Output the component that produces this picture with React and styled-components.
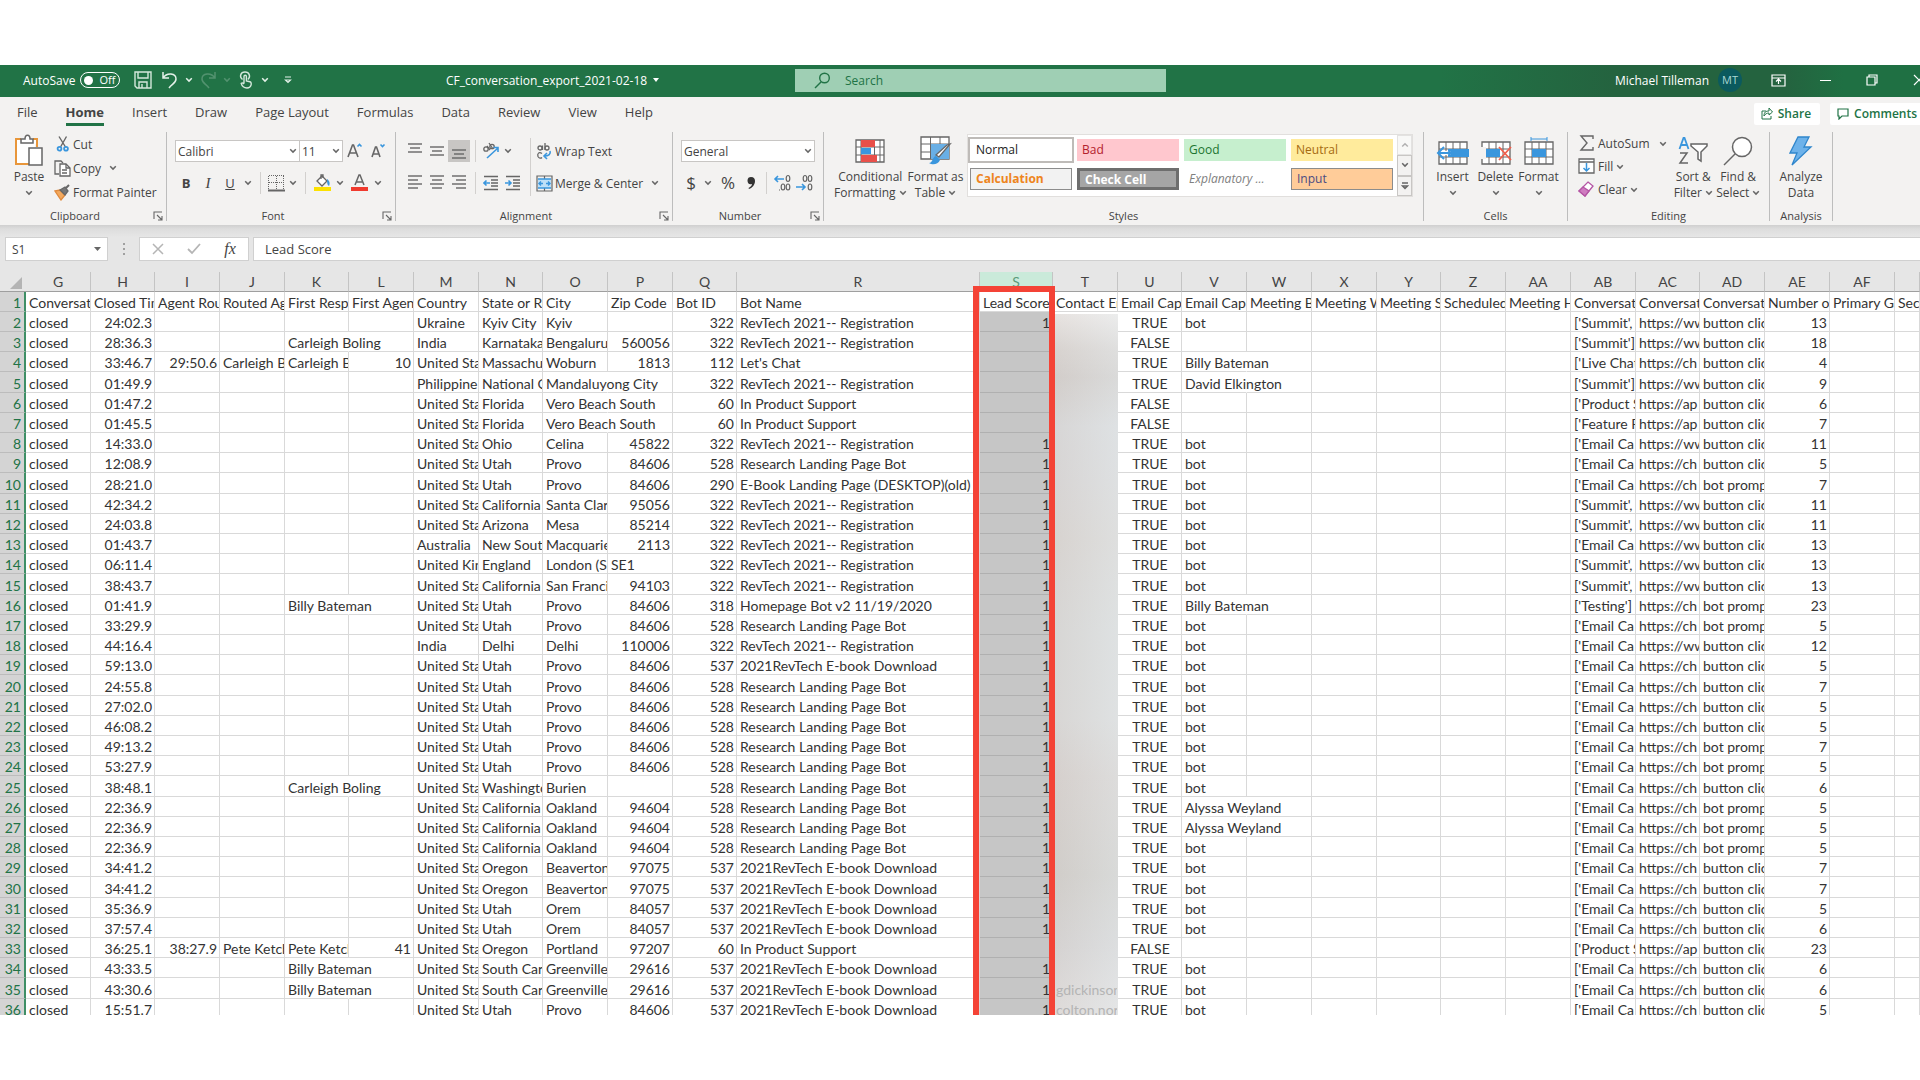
import React, { useState } from "react";
import styled, { createGlobalStyle } from "styled-components";

const green = "#217346";
const mint = "#9fcfb4";
const ribbonGrey = "#f3f2f1";
const barGrey = "#e6e6e6";
const line = "#d9d9d9";
const ink = "#444444";
const blue = "#3a96dd";

const uiFont = `"Open Sans", "Noto Sans", sans-serif`;
const cellFont = `Lato, "Liberation Sans", sans-serif`;

const GlobalStyle = createGlobalStyle`
    *, *::before, *::after {
        box-sizing: border-box;
    }

    body {
        margin: 0;
        background: #ffffff;
        font-family: ${uiFont};
        font-size: 12px;
        color: ${ink};
    }

    button, input, select {
        font: inherit;
        color: inherit;
    }
`;

/**
 * All drawings go through this svg, so stroke defaults are shared.
 */
const Icon = styled.svg.attrs(({ w = 16, h = 16 }) => ({
    width: w,
    height: h,
    viewBox: `0 0 ${w} ${h}`,
    "aria-hidden": true
}))`
    display: block;
    flex: none;
    fill: none;
    stroke: ${({ tone = "#666666" }) => tone};
`;

const Chevron = ({ tone = "#666666" }) =>
    <Icon w={8} h={6} tone={tone} strokeWidth="1.5">
        <path d="M1.2 1.3 4 4.1 6.8 1.3" />
    </Icon>;

const Page = styled.div`
    height: 100vh;
    padding: 65px 0;
    display: flex;
    flex-direction: column;
    overflow: hidden;
`;

const Window = styled.div`
    flex: 1;
    min-height: 0;
    display: flex;
    flex-direction: column;
    overflow: hidden;
`;

/* ---- Title bar ---- */

const TitleBar = styled.header`
    flex: none;
    display: flex;
    align-items: center;
    height: 32px;
    padding-bottom: 2px;
    color: #ffffff;
    background: linear-gradient(90deg, ${green} 75%, #24633f 84%, #24633f 93%, #1f7043 96%);
`;

const QuickAccess = styled.div`
    flex: none;
    display: flex;
    align-items: center;
    width: 446px;
    padding-left: 23px;
`;

const AutoSave = styled.label`
    display: flex;
    align-items: center;
    gap: 5px;
    width: 108px;
    font-size: 12px;
`;

const Pill = styled.span`
    display: flex;
    align-items: center;
    gap: 6px;
    height: 16px;
    padding: 0 4px 0 3px;
    border: 1px solid #ffffff;
    border-radius: 8px;
    font-size: 11px;
    line-height: 14px;
`;

const Knob = styled.input.attrs({ type: "checkbox" })`
    appearance: none;
    width: 9px;
    height: 9px;
    margin: 0;
    border-radius: 50%;
    background: #ffffff;
`;

const BarButton = styled.button`
    flex: none;
    display: flex;
    align-items: center;
    justify-content: center;
    width: ${({ w = 24 }) => w}px;
    height: 30px;
    padding: 0;
    border: none;
    background: none;
    opacity: ${({ $faded = false }) => $faded ? 0.25 : 1};
`;

const FileName = styled.button`
    flex: none;
    display: flex;
    align-items: center;
    gap: 6px;
    width: 349px;
    padding: 0;
    border: none;
    background: none;
    font-size: 12px;
    white-space: nowrap;
`;

const Search = styled.label`
    display: flex;
    align-items: center;
    gap: 14px;
    width: 371px;
    height: 23px;
    padding-left: 19px;
    color: ${green};
    background: ${mint};
`;

const SearchInput = styled.input`
    flex: 1;
    min-width: 0;
    padding: 0;
    border: none;
    outline: none;
    background: none;

    &::placeholder {
        color: ${green};
        opacity: 1;
    }
`;

const Account = styled.div`
    display: flex;
    align-items: center;
    gap: 9px;
    margin-left: auto;
    white-space: nowrap;
`;

const Avatar = styled.span`
    width: 24px;
    height: 24px;
    border-radius: 50%;
    background: #0b5a5e;
    color: #a9d8d4;
    font-size: 11px;
    line-height: 24px;
    text-align: center;
`;

const WindowButtons = styled.div`
    flex: none;
    display: flex;
    gap: 23px;
    margin: 0 -11px 0 24px;
`;

/* ---- Tabs ---- */

const TabRow = styled.nav`
    flex: none;
    display: flex;
    align-items: center;
    height: 33px;
    padding-left: 17px;
    background: ${ribbonGrey};
`;

const TabList = styled.div`
    display: flex;
    gap: 28px;
`;

const Tab = styled.button`
    height: 25px;
    padding: 0;
    border: none;
    border-bottom: 3px solid ${({ $active }) => $active ? green : "transparent"};
    background: none;
    font-weight: ${({ $active }) => $active ? 700 : 400};
    font-size: 13px;
    white-space: nowrap;
`;

const TabActions = styled.div`
    display: flex;
    gap: 10px;
    margin: 0 -6px 0 auto;
`;

const ActionButton = styled.button`
    display: flex;
    align-items: center;
    gap: 5px;
    height: 22px;
    padding: 0 9px 0 7px;
    border: none;
    border-radius: 2px;
    background: #ffffff;
    color: ${green};
    font-weight: 600;
`;

/* ---- Ribbon ---- */

const Ribbon = styled.section`
    flex: none;
    display: flex;
    height: 95px;
    padding: 2px 0 4px;
    background: ${ribbonGrey};
`;

const Group = styled.div`
    flex: none;
    display: flex;
    flex-direction: column;
    width: ${({ w }) => w}px;
    border-right: 1px solid #bdbdbd;
`;

const GroupBody = styled.div`
    flex: 1;
    display: flex;
    padding-left: ${({ inset = 8 }) => inset}px;
`;

const GroupFoot = styled.footer`
    display: flex;
    align-items: center;
    height: 10px;
    font-size: 11px;
    line-height: 10px;
`;

const GroupName = styled.span`
    flex: 1;
    text-align: center;
`;

const Launcher = styled.button`
    display: flex;
    justify-content: center;
    width: 16px;
    padding: 0;
    border: none;
    background: none;
`;

const Stack = styled.div`
    display: flex;
    flex-direction: column;
    gap: ${({ gap = 0 }) => gap}px;
    padding-top: ${({ top = 0 }) => top}px;
    margin-left: ${({ left = 0 }) => left}px;
`;

const Row = styled.div`
    display: flex;
    align-items: center;
    height: 22px;
`;

const ToolButton = styled.button`
    display: flex;
    align-items: center;
    justify-content: center;
    width: ${({ w = 22 }) => w}px;
    height: 22px;
    padding: 0;
    border: none;
    background: ${({ $active }) => $active ? "#c8c6c4" : "none"};
`;

const LabelButton = styled.button`
    display: flex;
    align-items: center;
    gap: ${({ gap = 2 }) => gap}px;
    height: ${({ h = 24 }) => h}px;
    padding: 0;
    border: none;
    background: none;
    white-space: nowrap;
`;

const IconSlot = styled.span`
    display: flex;
    justify-content: center;
    width: 17px;
`;

const TallButton = styled.button`
    display: grid;
    grid-template-rows: 37px 16px 16px;
    align-items: center;
    justify-items: center;
    align-self: flex-start;
    width: ${({ w }) => w}px;
    padding: 0;
    border: none;
    background: none;
    line-height: 16px;
    white-space: nowrap;
`;

const Line = styled.span`
    display: flex;
    align-items: center;
    gap: 3px;
`;

const Divider = styled.span`
    flex: none;
    width: 1px;
    height: ${({ h = 22 }) => h}px;
    margin: ${({ top = 0 }) => top}px 5px 0;
    background: #d2d0ce;
`;

const Combo = styled.label`
    display: flex;
    align-items: center;
    width: ${({ w }) => w}px;
    height: 22px;
    margin-right: ${({ $joined }) => $joined ? "-1px" : 0};
    padding: 0 2px;
    border: 1px solid #c8c6c4;
    background: #ffffff;
`;

const Select = styled.select`
    flex: 1;
    min-width: 0;
    padding: 0;
    border: none;
    outline: none;
    appearance: none;
    background: none;
`;

const Glyph = styled.span`
    font-size: ${({ size = 14 }) => size}px;
    line-height: 18px;
    font-weight: ${({ $bold }) => $bold ? 700 : 400};
    font-style: ${({ $italic }) => $italic ? "italic" : "normal"};
    font-family: ${({ $italic }) => $italic ? `"Liberation Serif", serif` : uiFont};
    text-decoration: ${({ $under }) => $under ? "underline" : "none"};
`;

const Gallery = styled.div`
    display: flex;
    height: 63px;
    border: 1px solid #e1dfdd;
    background: #ffffff;
`;

const Swatches = styled.div`
    display: grid;
    grid-template-columns: repeat(4, 102px);
    grid-template-rows: 22px 22px;
    gap: 7px 5px;
    padding: 4px 4px 0 2px;
`;

const Swatch = styled.button`
    height: 22px;
    padding: 0 0 0 5px;
    border: ${({ $edge = "none" }) => $edge};
    outline: ${({ $selected }) => $selected ? "2px solid #bebbb8" : "none"};
    background: ${({ $fill }) => $fill};
    color: ${({ $ink }) => $ink};
    font-weight: ${({ $bold }) => $bold ? 700 : 400};
    font-style: ${({ $italic }) => $italic ? "italic" : "normal"};
    font-size: 12px;
    line-height: 18px;
    text-align: left;
    white-space: nowrap;
`;

const Scroller = styled.div`
    display: grid;
    grid-template-rows: repeat(3, 1fr);
    width: 15px;
`;

const ScrollButton = styled.button`
    display: flex;
    align-items: center;
    justify-content: center;
    padding: 0;
    border: 1px solid #c8c6c4;
    background: ${ribbonGrey};
    opacity: ${({ disabled }) => disabled ? 0.5 : 1};
`;

/* ---- Formula bar ---- */

const FormulaBar = styled.div`
    flex: none;
    display: flex;
    height: 47px;
    padding: 12px 0 11px 5px;
    background: linear-gradient(#cfcfcf, #dddddd 4px, ${barGrey} 12px);
`;

const BarBox = styled.div`
    display: flex;
    align-items: center;
    width: ${({ w }) => w}px;
    border: 1px solid #d0d0d0;
    background: #ffffff;
`;

const NameInput = styled.input`
    flex: 1;
    min-width: 0;
    padding: 0 0 0 6px;
    border: none;
    outline: none;
    background: none;
    font-size: 12px;
`;

const Grip = styled.span`
    display: flex;
    align-items: center;
    justify-content: center;
    width: 31px;
`;

const FormulaInput = styled.input`
    flex: 1;
    min-width: 0;
    margin-left: 4px;
    padding: 0 0 0 11px;
    border: 1px solid #d0d0d0;
    border-right: none;
    outline: none;
    background: #ffffff;
    font-size: 13px;
`;

/* ---- Sheet ---- */

const Sheet = styled.main`
    position: relative;
    flex: 1;
    min-height: 0;
    overflow: hidden;
    background: #ffffff;
`;

const Grid = styled.table`
    position: relative;
    width: 100%;
    table-layout: fixed;
    border-collapse: separate;
    border-spacing: 0;
    font-family: ${cellFont};
    font-size: 14px;
    line-height: 17px;
    color: #333333;

    tr {
        height: 20px;
    }

    tbody tr:nth-child(5n) {
        height: 21px;
    }
`;

const Corner = styled.td`
    padding: 0;
    border-bottom: 1px solid #9f9f9f;
    background: ${barGrey};
`;

const ColumnHead = styled.th`
    padding: 0;
    border-right: 1px solid #c4c4c4;
    border-bottom: 1px solid #9f9f9f;
    background: ${({ $active }) => $active ? "#caeada" : barGrey};
    color: ${({ $active }) => $active ? "#5a9a7a" : ink};
    font-weight: 400;
`;

const RowHead = styled.th`
    padding: 2px 3px 0 0;
    border-right: 2px solid #3f8f66;
    border-bottom: 1px solid #bcbcbc;
    background: #d4d4d4;
    color: ${green};
    font-weight: 400;
    text-align: right;
`;

const Cell = styled.td`
    padding: 2px 2px 0 3px;
    overflow: ${({ $spill }) => $spill ? "visible" : "hidden"};
    border-right: 1px solid ${({ $spill, $veiled }) => $spill || $veiled ? "transparent" : line};
    border-bottom: 1px solid ${({ $veiled, $picked }) => $veiled ? "transparent" : $picked ? "#b0b0b0" : line};
    background: ${({ $picked }) => $picked ? "#c6c6c6" : "none"};
    color: ${({ $veiled }) => $veiled ? "#b4b4b4" : "inherit"};
    text-align: ${({ $side = "left" }) => $side};
    white-space: nowrap;
`;

// Smudge hiding the contact addresses, sits behind the table
const Veil = styled.div`
    position: absolute;
    top: 42px;
    bottom: 0;
    left: 1053px;
    width: 65px;
    background:
        linear-gradient(90deg, rgba(200, 185, 178, 0.25), rgba(226, 230, 232, 0.35)),
        linear-gradient(
            #f1f0ef, #dddbd9 5%, #d5d3d1 9%, #dcdfe1 16%, #dcddde 24%, #dcdbd9 32%,
            #dcdfdf 45%, #dddfdf 58%, #dad7d5 66%, #d3d3d0 80%, #d9dadb 90%, #e6e6e6
        );
`;

const Highlight = styled.div`
    position: absolute;
    top: 14px;
    bottom: 0;
    left: 973px;
    width: 82px;
    border: 6px solid #f44336;
    border-bottom: none;
    pointer-events: none;
`;

const columns = [
    ["G", 65], ["H", 64], ["I", 65], ["J", 65], ["K", 64], ["L", 65], ["M", 65],
    ["N", 64], ["O", 65], ["P", 65], ["Q", 64], ["R", 243], ["S", 73], ["T", 65],
    ["U", 64], ["V", 65], ["W", 65], ["X", 65], ["Y", 64], ["Z", 65], ["AA", 65],
    ["AB", 65], ["AC", 64], ["AD", 65], ["AE", 65], ["AF", 65], ["AG", null]
];

const titles = {
    G: "Conversat", H: "Closed Tim", I: "Agent Rou", J: "Routed Ag",
    K: "First Resp", L: "First Agen", M: "Country", N: "State or Re",
    O: "City", P: "Zip Code", Q: "Bot ID", R: "Bot Name", S: "Lead Score",
    T: "Contact Em", U: "Email Cap", V: "Email Cap", W: "Meeting B",
    X: "Meeting W", Y: "Meeting S", Z: "Scheduled", AA: "Meeting H",
    AB: "Conversat", AC: "Conversat", AD: "Conversat", AE: "Number o",
    AF: "Primary G", AG: "Sec"
};

const alignment = {
    H: "right", I: "right", L: "right", P: "right", Q: "right",
    S: "right", U: "center", AE: "right"
};

const bots = {
    rev: [322, "RevTech 2021-- Registration"],
    chat: [112, "Let's Chat"],
    support: [60, "In Product Support"],
    research: [528, "Research Landing Page Bot"],
    ebook: [290, "E-Book Landing Page (DESKTOP)(old)"],
    home: [318, "Homepage Bot v2 11/19/2020"],
    download: [537, "2021RevTech E-book Download"]
};

const US = "United Sta";
const email = "['Email Ca";
const summit = "['Summit',";
const www = "https://ww";
const chat = "https://ch";
const app = "https://ap";
const click = "button clic";
const prompt = "bot promp";

// time, country, state, city, zip, bot, topic, link, event, count, extra cells
const data = [
    ["24:02.3", "Ukraine", "Kyiv City", "Kyiv", "", "rev", summit, www, click, 13],
    ["28:36.3", "India", "Karnataka", "Bengaluru", 560056, "rev", "['Summit']", www, click, 18, { K: "Carleigh Boling", S: "", U: "FALSE", V: "" }],
    ["33:46.7", US, "Massachu", "Woburn", 1813, "chat", "['Live Chat", chat, click, 4, { I: "29:50.6", J: "Carleigh B", K: "Carleigh B", L: 10, S: "", V: "Billy Bateman" }],
    ["01:49.9", "Philippine", "National C", "Mandaluyong City", "", "rev", "['Summit']", www, click, 9, { S: "", V: "David Elkington" }],
    ["01:47.2", US, "Florida", "Vero Beach South", "", "support", "['Product S", app, click, 6, { S: "", U: "FALSE", V: "" }],
    ["01:45.5", US, "Florida", "Vero Beach South", "", "support", "['Feature R", app, click, 7, { S: "", U: "FALSE", V: "" }],
    ["14:33.0", US, "Ohio", "Celina", 45822, "rev", email, www, click, 11],
    ["12:08.9", US, "Utah", "Provo", 84606, "research", email, chat, click, 5],
    ["28:21.0", US, "Utah", "Provo", 84606, "ebook", email, chat, prompt, 7],
    ["42:34.2", US, "California", "Santa Clar", 95056, "rev", summit, www, click, 11],
    ["24:03.8", US, "Arizona", "Mesa", 85214, "rev", summit, www, click, 11],
    ["01:43.7", "Australia", "New Sout", "Macquarie", 2113, "rev", email, www, click, 13],
    ["06:11.4", "United Kin", "England", "London (S", "SE1", "rev", summit, www, click, 13],
    ["38:43.7", US, "California", "San Franci", 94103, "rev", summit, www, click, 13],
    ["01:41.9", US, "Utah", "Provo", 84606, "home", "['Testing']", chat, prompt, 23, { K: "Billy Bateman", V: "Billy Bateman" }],
    ["33:29.9", US, "Utah", "Provo", 84606, "research", email, chat, prompt, 5],
    ["44:16.4", "India", "Delhi", "Delhi", 110006, "rev", email, www, click, 12],
    ["59:13.0", US, "Utah", "Provo", 84606, "download", email, chat, click, 5],
    ["24:55.8", US, "Utah", "Provo", 84606, "research", email, chat, click, 7],
    ["27:02.0", US, "Utah", "Provo", 84606, "research", email, chat, click, 5],
    ["46:08.2", US, "Utah", "Provo", 84606, "research", email, chat, click, 5],
    ["49:13.2", US, "Utah", "Provo", 84606, "research", email, chat, prompt, 7],
    ["53:27.9", US, "Utah", "Provo", 84606, "research", email, chat, prompt, 5],
    ["38:48.1", US, "Washingto", "Burien", "", "research", email, chat, click, 6, { K: "Carleigh Boling" }],
    ["22:36.9", US, "California", "Oakland", 94604, "research", email, chat, prompt, 5, { V: "Alyssa Weyland" }],
    ["22:36.9", US, "California", "Oakland", 94604, "research", email, chat, prompt, 5, { V: "Alyssa Weyland" }],
    ["22:36.9", US, "California", "Oakland", 94604, "research", email, chat, prompt, 5],
    ["34:41.2", US, "Oregon", "Beaverton", 97075, "download", email, chat, click, 7],
    ["34:41.2", US, "Oregon", "Beaverton", 97075, "download", email, chat, click, 7],
    ["35:36.9", US, "Utah", "Orem", 84057, "download", email, chat, click, 5],
    ["37:57.4", US, "Utah", "Orem", 84057, "download", email, chat, click, 6],
    ["36:25.1", US, "Oregon", "Portland", 97207, "support", "['Product S", app, click, 23, { I: "38:27.9", J: "Pete Ketch", K: "Pete Ketch", L: 41, S: "", U: "FALSE", V: "" }],
    ["43:33.5", US, "South Caro", "Greenville", 29616, "download", email, chat, click, 6, { K: "Billy Bateman" }],
    ["43:30.6", US, "South Caro", "Greenville", 29616, "download", email, chat, click, 6, { K: "Billy Bateman", T: "gdickinson" }],
    ["15:51.7", US, "Utah", "Provo", 84606, "download", email, chat, click, 5, { T: "colton.nor" }]
];

const rows = data.map(([H, M, N, O, P, bot, AB, AC, AD, AE, extra]) => ({
    G: "closed", H, M, N, O, P, Q: bots[bot][0], R: bots[bot][1],
    S: 1, U: "TRUE", V: "bot", AB, AC, AD, AE, ...extra
}));

// Long text runs over its right neighbour when that cell is empty
const spills = (row, name, next) =>
    ["K", "O", "V"].includes(name) && String(row[name] ?? "").length > 10 && !row[next];

// A zip code that is not a number keeps to the left
const sideOf = (row, name) =>
    name === "P" && typeof row[name] === "string" ? "left" : alignment[name];

const tabs = [
    "File", "Home", "Insert", "Draw", "Page Layout", "Formulas",
    "Data", "Review", "View", "Help"
];

const styles = [
    { label: "Normal", $fill: "#ffffff", $ink: "#222222", $edge: "1px solid #ffffff", $selected: true },
    { label: "Bad", $fill: "#ffc7ce", $ink: "#b3202c" },
    { label: "Good", $fill: "#c6efce", $ink: "#1c7430" },
    { label: "Neutral", $fill: "#ffeb9c", $ink: "#a56a10" },
    { label: "Calculation", $fill: "#f2f2f2", $ink: "#ee8420", $edge: "1px solid #8c8c8c", $bold: true },
    { label: "Check Cell", $fill: "#a5a5a5", $ink: "#ffffff", $edge: "3px solid #6e6e6e", $bold: true },
    { label: "Explanatory ...", $fill: "#ffffff", $ink: "#808080", $italic: true },
    { label: "Input", $fill: "#ffcc99", $ink: "#4b4b82", $edge: "1px solid #8c8c8c" }
];

/* ---- Drawings ---- */

const Lines = ({ widths, side = "center", top = 2 }) =>
    <Icon w={16} h={18} strokeWidth="1.4">
        {widths.map((w, i) => {
            const x = side === "left" ? 1 : side === "right" ? 15 - w : 8 - w / 2;
            return <path key={i} d={`M${x} ${top + i * 4}h${w}`} />;
        })}
    </Icon>;

const IndentIcon = ({ flip = false }) =>
    <Icon w={16} h={16} strokeWidth="1.3">
        <path d="M1 1.5h14M8 5h7M8 8h7M8 11h7M1 14.5h14" />
        <path stroke={blue} strokeWidth="1.6" d={flip ? "M0 8h6M3.5 5.5 6 8l-2.5 2.5" : "M7 8H1M3.5 5.5 1 8l2.5 2.5"} />
    </Icon>;

const LauncherIcon = () =>
    <Icon w={10} h={10} strokeWidth="1.1">
        <path d="M1 8V1h8M4 4l4.5 4.5M9 5v4H5" />
    </Icon>;

const PasteIcon = () =>
    <Icon w={30} h={34} strokeWidth="1.5">
        <path stroke="#e8963a" strokeWidth="2" fill="#fff" d="M7 5H2v25h14M19 5h4v8" />
        <path stroke="none" fill="#fff" d="M4 7h17v22H4z" />
        <path fill="#fff" d="M7 9V5h4c0-5 5-5 5 0h3v4z" />
        <path fill="#fff" d="M15 14h13v17H15z" />
    </Icon>;

const CutIcon = () =>
    <Icon w={14} h={16} strokeWidth="1.4">
        <path d="M3 0.5 9.5 11M10.5 0.5 4.5 11" />
        <circle stroke={blue} strokeWidth="1.8" cx="3.5" cy="12.8" r="1.9" />
        <circle stroke={blue} strokeWidth="1.8" cx="10" cy="12.8" r="1.9" />
    </Icon>;

const CopyIcon = () =>
    <Icon w={17} h={17} strokeWidth="1.3">
        <path d="M5 14H1V1h6l2 2" />
        <path fill="#fff" d="M6 4h6l4 4v8H6z" />
        <path d="M12 4v4h4M8 10h5M8 13h5" />
    </Icon>;

const PainterIcon = () =>
    <Icon w={17} h={17} strokeWidth="1.3">
        <path stroke="#e08a3c" fill="#f3a95e" d="M1 7l5-1 5 5-4 5z" />
        <path fill="#777" d="M6 6l5-3 3 4-3 4z" />
        <path strokeWidth="2" d="M12 4l3-3" />
    </Icon>;

const BordersIcon = () =>
    <Icon w={17} h={17}>
        <path strokeDasharray="1 1" d="M1 .5h15M1 7.5h15M.5 1v13M8.5 1v13M15.5 1v13" />
        <path strokeWidth="2" d="M0 15.5h17" />
    </Icon>;

const BucketIcon = () =>
    <Icon w={17} h={18} strokeWidth="1.3">
        <path fill="#fff" d="M3 7l5-5 5 5-5 5z" />
        <path d="M7 5V1h2v3" />
        <path stroke="none" fill={blue} d="M13 5c3 2 3 5 2 7-2-1-2-4-2-7z" />
        <path stroke="none" fill="#fce100" d="M0 13h17v4H0z" />
    </Icon>;

const FontColorIcon = () =>
    <Icon w={17} h={18} strokeWidth="1.5">
        <path d="M4 11 8 1h1l4 10M5.3 8h6.4" />
        <path stroke="none" fill="#f03a2e" d="M0 13h17v4H0z" />
    </Icon>;

const SizeIcon = ({ grow = false }) =>
    <Icon w={18} h={18} strokeWidth="1.6">
        <path d={grow ? "M2 15 6.5 3h1L12 15M3.5 11h7" : "M3 15 6.5 5h1L11 15M4.5 12h5"} />
        <path stroke={blue} d={grow ? "M11.5 4.5 13.5 2.5 15.5 4.5" : "M11.5 2.5 13.5 4.5 15.5 2.5"} />
    </Icon>;

const OrientationIcon = () =>
    <Icon w={18} h={18} strokeWidth="1.3">
        <circle cx="4" cy="7" r="2.2" />
        <path d="M5 4l3 4M7 1l4 6" />
        <circle cx="10" cy="4.5" r="2.2" />
        <path stroke={blue} strokeWidth="1.6" d="M5 16 16 6M11.5 5.5H16V10" />
    </Icon>;

const WrapIcon = () =>
    <Icon w={17} h={18} strokeWidth="1.3">
        <circle cx="4" cy="6" r="2" />
        <path d="M6.5 3.5V8M9 1v7M6 11.5c-3-2-5 0-4 3 1 2 3 2 4 1" />
        <circle cx="11" cy="6" r="2" />
        <path stroke={blue} strokeWidth="1.6" d="M14 9c1 3-1 5-6 5M11 11l-3 3 3 3" />
    </Icon>;

const MergeIcon = () =>
    <Icon w={17} h={17} strokeWidth="1.2">
        <path d="M1 1h15v15H1zM8.5 1v3M8.5 13v3" />
        <path stroke="none" fill="#bfe0f7" d="M2 4h13v9H2z" />
        <path stroke={blue} strokeWidth="1.4" d="M2 4h13M2 13h13M3 8.5h4M5 6.5l-2 2 2 2M14 8.5h-4M12 6.5l2 2-2 2" />
    </Icon>;

const DecimalIcon = ({ less = false }) =>
    <Icon w={18} h={18} strokeWidth="1.2">
        {less
            ? <>
                <ellipse cx="10" cy="4.5" rx="1.8" ry="3" />
                <ellipse cx="15" cy="4.5" rx="1.8" ry="3" />
                <ellipse cx="15" cy="13" rx="1.8" ry="3" />
                <path stroke={blue} strokeWidth="1.6" d="M1 13h9M7 10l3 3-3 3" />
            </>
            : <>
                <ellipse cx="15" cy="4.5" rx="1.8" ry="3" />
                <ellipse cx="10" cy="13" rx="1.8" ry="3" />
                <ellipse cx="15" cy="13" rx="1.8" ry="3" />
                <path stroke={blue} strokeWidth="1.6" d="M11 5H2M5 2 2 5l3 3" />
                <path d="M6 16h1" />
            </>}
    </Icon>;

const ConditionalIcon = () =>
    <Icon w={30} h={24}>
        <path fill="#fff" strokeWidth="1.3" d="M1 1h28v22H1z" />
        <path d="M1 8h28M1 16h28M6 1v22M19.5 1v22M25 1v22" />
        <path stroke="none" fill="#e8504a" d="M6 1h14v7H6zM6 16h16v7H6z" />
        <path stroke="none" fill={blue} d="M6 9h10v6H6z" />
    </Icon>;

const FormatTableIcon = () =>
    <Icon w={32} h={30}>
        <path fill="#fff" strokeWidth="1.3" d="M1 1h28v22H1z" />
        <path d="M1 8h28M1 16h28M10.5 1v22M20 1v22" />
        <path stroke="none" fill="#69afe5" d="M11 8h18v15H11z" />
        <path fill="#fff" strokeWidth="1.3" d="M30 8 19 21l-3-2L27 9z" />
        <path stroke="none" fill={blue} d="M9 27c4 0 3-6 7-7l4 4c-2 5-8 5-11 3z" />
    </Icon>;

const CellsIcon = ({ kind }) =>
    <Icon w={34} h={28}>
        <path fill="#fff" strokeWidth="1.3" d="M3 5h28v22H3z" />
        <path d="M3 12h28M3 20h28M10 5v22M17 5v22M24 5v22" />
        {kind === "insert" && <>
            <path stroke="none" fill={blue} d="M12 12h21v8H12z" />
            <path stroke="#fff" strokeWidth="4" d="M15 16H4" />
            <path stroke={blue} strokeWidth="2" d="M15 16H2M8 10l-6 6 6 6M15 13l-3 3 3 3" />
        </>}
        {kind === "delete" && <>
            <path stroke="none" fill={ribbonGrey} d="M1 10h6v12H1z" />
            <path stroke="none" fill={blue} d="M7 12h14v8H7z" />
            <path stroke="#f0604d" strokeWidth="1.8" d="M20 10l12 13M32 10 20 23" />
        </>}
        {kind === "format" && <>
            <path stroke="none" fill={blue} d="M10 12h14v8H10z" />
            <path stroke={blue} d="M9 2h16M9 0v4M25 0v4" />
        </>}
    </Icon>;

const SigmaIcon = () =>
    <Icon w={16} h={17} strokeWidth="1.4">
        <path d="M14 4V1H2l6 7-6 7h12v-3" />
    </Icon>;

const FillIcon = () =>
    <Icon w={17} h={17} strokeWidth="1.3">
        <path fill="#fff" d="M1 1h15v14H1zM1 4h15" />
        <path stroke={blue} strokeWidth="1.5" d="M8.5 5v8M5.5 10l3 3 3-3" />
    </Icon>;

const EraserIcon = () =>
    <Icon w={17} h={17} tone="#b455a4" strokeWidth="1.3">
        <path fill="#fff" d="M10 1l5 4-8 10-6-5z" />
        <path fill="#cf7cc0" d="M5 6l6 4-4 5-6-5z" />
    </Icon>;

const SortIcon = () =>
    <Icon w={30} h={30} strokeWidth="1.5">
        <path stroke={blue} strokeWidth="1.8" d="M1.5 13 5.5 2h1l4 11M3 9h6" />
        <path d="M2 17h7L2 27h8" />
        <path fill="#fff" d="M13 8h16v2l-6 6v9l-3-2v-7l-7-6z" />
    </Icon>;

const FindIcon = () =>
    <Icon w={30} h={30} strokeWidth="1.5">
        <circle fill="#fff" cx="19" cy="11" r="9.5" />
        <path d="M12 18 1 29" />
    </Icon>;

const BoltIcon = () =>
    <Icon w={24} h={30} tone="#2f86cc" strokeWidth="1.3">
        <path fill="#6db2ea" d="M9 1h11l-5 10h7L3 29l5-12H1z" />
    </Icon>;

const SearchIcon = () =>
    <Icon w={17} h={17} tone={green} strokeWidth="1.4">
        <circle cx="10.5" cy="6" r="4.8" />
        <path d="M7 10 1 16" />
    </Icon>;

/* ---- Parts ---- */

const RibbonGroup = ({ label, w, inset, launcher = false, children }) =>
    <Group w={w}>
        <GroupBody inset={inset}>{children}</GroupBody>
        <GroupFoot>
            <GroupName>{label}</GroupName>
            {launcher && <Launcher aria-label={`${label} settings`}><LauncherIcon /></Launcher>}
        </GroupFoot>
    </Group>;

const Tall = ({ w, icon, first, second }) =>
    <TallButton w={w}>
        {icon}
        <span>{first}</span>
        <Line>{second}{second !== "Data" && <Chevron />}</Line>
    </TallButton>;

const Title = () =>
    <TitleBar>
        <QuickAccess>
            <AutoSave>
                AutoSave
                <Pill><Knob />Off</Pill>
            </AutoSave>
            <BarButton aria-label="Save">
                <Icon w={18} h={18} tone="#d5e8dc" strokeWidth="1.4">
                    <path d="M1 1h16v16H3l-2-2zM4 1v6h10V1M5 17v-6h8v6M8 13v4" />
                </Icon>
            </BarButton>
            <BarButton w={30} aria-label="Undo">
                <Icon w={18} h={18} tone="#e4f1e9" strokeWidth="1.5">
                    <path d="M2 1v6h6M2 7c4-6 13-5 13 1 0 4-4 5-7 9" />
                </Icon>
            </BarButton>
            <Chevron tone="#e4f1e9" />
            <BarButton w={30} $faded aria-label="Redo">
                <Icon w={18} h={18} tone="#e4f1e9" strokeWidth="1.5">
                    <path d="M16 1v6h-6M16 7C12 1 3 2 3 8c0 4 4 5 7 9" />
                </Icon>
            </BarButton>
            <BarButton w={8} $faded aria-label="Redo list"><Chevron tone="#e4f1e9" /></BarButton>
            <BarButton w={30} aria-label="Touch mode">
                <Icon w={14} h={18} tone="#d5e8dc" strokeWidth="1.4">
                    <path d="M3.5 8.5C0 6 1.5 1 6 1s6 5 2.8 7.5" />
                    <path d="M5 12.5V5.5c0-1.6 2.4-1.6 2.4 0V10l3.6.8c2.2.6 1.6 6.2-3 6.2-3.600 0-5.2-2.4-5.8-4.6 1-.8 2-.4 2.8.6" />
                </Icon>
            </BarButton>
            <Chevron tone="#e4f1e9" />
            <BarButton w={38} aria-label="Customize">
                <Icon w={10} h={8} tone="#e4f1e9" strokeWidth="1.2">
                    <path d="M2 1h6M2.5 4 5 6.5 7.5 4z" />
                </Icon>
            </BarButton>
        </QuickAccess>
        <FileName>
            CF_conversation_export_2021-02-18
            <Icon w={6} h={4} tone="none"><path fill="#fff" d="M0 0h6L3 4z" /></Icon>
        </FileName>
        <Search>
            <SearchIcon />
            <SearchInput placeholder="Search" aria-label="Search" />
        </Search>
        <Account>
            Michael Tilleman
            <Avatar>MT</Avatar>
        </Account>
        <WindowButtons>
            <BarButton aria-label="Ribbon display">
                <Icon w={15} h={13} tone="#fff" strokeWidth="1.2">
                    <path d="M1 1h13v11H1zM1 4h13M7.5 10V5M5 7.5 7.5 5 10 7.5" />
                </Icon>
            </BarButton>
            <BarButton aria-label="Minimize">
                <Icon w={11} h={13} tone="#fff"><path d="M0 6.5h11" /></Icon>
            </BarButton>
            <BarButton aria-label="Restore">
                <Icon w={12} h={12} tone="#fff" strokeWidth="1.2">
                    <path d="M1 3h8v8H1zM3 3V1h8v8H9" />
                </Icon>
            </BarButton>
            <BarButton aria-label="Close">
                <Icon w={12} h={12} tone="#fff" strokeWidth="1.2">
                    <path d="M1 1l10 10M11 1 1 11" />
                </Icon>
            </BarButton>
        </WindowButtons>
    </TitleBar>;

const Tabs = () => {
    const [active, setActive] = useState("Home");

    return <TabRow>
        <TabList>
            {tabs.map(label =>
                <Tab key={label} $active={label === active} onClick={() => setActive(label)}>
                    {label}
                </Tab>
            )}
        </TabList>
        <TabActions>
            <ActionButton>
                <Icon w={12} h={13} tone={green}>
                    <path d="M5 4H1v8h9V9M3 9c0-4 2-5 5-5V1l3.5 4L8 8V6C6 6 4 7 3 9z" />
                </Icon>
                Share
            </ActionButton>
            <ActionButton>
                <Icon w={12} h={12} tone={green} strokeWidth="1.2">
                    <path d="M1 1h10v7H5l-3 3V8H1z" />
                </Icon>
                Comments
            </ActionButton>
        </TabActions>
    </TabRow>;
};

const Tools = () =>
    <Ribbon>
        <RibbonGroup label="Clipboard" w={167} launcher>
            <Tall w={42} icon={<PasteIcon />} first="Paste" second="" />
            <Stack left={4}>
                <LabelButton><IconSlot><CutIcon /></IconSlot>Cut</LabelButton>
                <LabelButton>
                    <IconSlot><CopyIcon /></IconSlot>Copy&nbsp;&nbsp; <Chevron />
                </LabelButton>
                <LabelButton><IconSlot><PainterIcon /></IconSlot>Format Painter</LabelButton>
            </Stack>
        </RibbonGroup>

        <RibbonGroup label="Font" w={229} launcher>
            <Stack top={8} gap={10}>
                <Row>
                    <Combo w={125} $joined>
                        <Select aria-label="Font name"><option>Calibri</option></Select>
                        <Chevron />
                    </Combo>
                    <Combo w={44}>
                        <Select aria-label="Font size"><option>11</option></Select>
                        <Chevron />
                    </Combo>
                    <ToolButton w={24} aria-label="Grow font"><SizeIcon grow /></ToolButton>
                    <ToolButton aria-label="Shrink font"><SizeIcon /></ToolButton>
                </Row>
                <Row>
                    <ToolButton><Glyph $bold size={13}>B</Glyph></ToolButton>
                    <ToolButton><Glyph $italic size={15}>I</Glyph></ToolButton>
                    <ToolButton><Glyph $under size={13}>U</Glyph></ToolButton>
                    <ToolButton w={14} aria-label="Underline styles"><Chevron /></ToolButton>
                    <Divider />
                    <ToolButton w={20} aria-label="Borders"><BordersIcon /></ToolButton>
                    <ToolButton w={14} aria-label="Border styles"><Chevron /></ToolButton>
                    <Divider />
                    <ToolButton aria-label="Fill color"><BucketIcon /></ToolButton>
                    <ToolButton w={14} aria-label="Fill colors"><Chevron /></ToolButton>
                    <ToolButton w={24} aria-label="Font color"><FontColorIcon /></ToolButton>
                    <ToolButton w={14} aria-label="Font colors"><Chevron /></ToolButton>
                </Row>
            </Stack>
        </RibbonGroup>

        <RibbonGroup label="Alignment" w={277} launcher>
            <Stack top={8} gap={10}>
                <Row>
                    <ToolButton aria-label="Top align"><Lines widths={[14, 10, 14]} /></ToolButton>
                    <ToolButton aria-label="Middle align"><Lines top={5} widths={[14, 10, 14]} /></ToolButton>
                    <ToolButton $active aria-label="Bottom align"><Lines top={8} widths={[14, 10, 14]} /></ToolButton>
                    <Divider />
                    <ToolButton w={20} aria-label="Orientation"><OrientationIcon /></ToolButton>
                    <ToolButton w={14} aria-label="Orientations"><Chevron /></ToolButton>
                </Row>
                <Row>
                    <ToolButton aria-label="Align left"><Lines side="left" widths={[14, 10, 14, 10]} /></ToolButton>
                    <ToolButton aria-label="Center"><Lines widths={[14, 10, 14, 10]} /></ToolButton>
                    <ToolButton aria-label="Align right"><Lines side="right" widths={[14, 10, 14, 10]} /></ToolButton>
                    <Divider />
                    <ToolButton w={20} aria-label="Decrease indent"><IndentIcon /></ToolButton>
                    <ToolButton w={24} aria-label="Increase indent"><IndentIcon flip /></ToolButton>
                </Row>
            </Stack>
            <Divider h={58} top={6} />
            <Stack top={8} gap={10}>
                <LabelButton h={22}><WrapIcon />Wrap Text</LabelButton>
                <LabelButton h={22}><MergeIcon />Merge &amp; Center&nbsp;&nbsp; <Chevron /></LabelButton>
            </Stack>
        </RibbonGroup>

        <RibbonGroup label="Number" w={151} launcher>
            <Stack top={8} gap={10}>
                <Row>
                    <Combo w={134}>
                        <Select aria-label="Number format"><option>General</option></Select>
                        <Chevron />
                    </Combo>
                </Row>
                <Row>
                    <ToolButton w={20}><Glyph size={17}>$</Glyph></ToolButton>
                    <ToolButton w={14} aria-label="Currencies"><Chevron /></ToolButton>
                    <ToolButton w={26}><Glyph size={17}>%</Glyph></ToolButton>
                    <ToolButton w={20} aria-label="Comma style">
                        <Icon w={9} h={14} tone="none">
                            <path fill="#333" d="M4 1c3 0 4 2 4 4 0 4-3 7-6 8l-.5-1C4 11 5 9 5 8 2 9 .5 7 .5 4.5.5 2 2 1 4 1z" />
                        </Icon>
                    </ToolButton>
                    <Divider />
                    <ToolButton w={20} aria-label="Increase decimal"><DecimalIcon /></ToolButton>
                    <ToolButton w={24} aria-label="Decrease decimal"><DecimalIcon less /></ToolButton>
                </Row>
            </Stack>
        </RibbonGroup>

        <RibbonGroup label="Styles" w={600} inset={10}>
            <Tall w={70} icon={<ConditionalIcon />} first="Conditional" second="Formatting" />
            <Tall w={63} icon={<FormatTableIcon />} first="Format as" second="Table" />
            <Stack top={2}>
                <Gallery>
                    <Swatches>
                        {styles.map(({ label, ...look }) =>
                            <Swatch key={label} {...look}>{label}</Swatch>
                        )}
                    </Swatches>
                    <Scroller>
                        <ScrollButton disabled aria-label="Previous styles">
                            <Icon w={8} h={6} strokeWidth="1.5"><path d="M1.2 4.5 4 1.7 6.8 4.5" /></Icon>
                        </ScrollButton>
                        <ScrollButton aria-label="Next styles"><Chevron /></ScrollButton>
                        <ScrollButton aria-label="All styles">
                            <Icon w={8} h={8} strokeWidth="1.3"><path d="M1 1h6M1.5 4 4 6.5 6.5 4z" /></Icon>
                        </ScrollButton>
                    </Scroller>
                </Gallery>
            </Stack>
        </RibbonGroup>

        <RibbonGroup label="Cells" w={144} inset={7}>
            <Tall w={43} icon={<CellsIcon kind="insert" />} first="Insert" second="" />
            <Tall w={43} icon={<CellsIcon kind="delete" />} first="Delete" second="" />
            <Tall w={43} icon={<CellsIcon kind="format" />} first="Format" second="" />
        </RibbonGroup>

        <RibbonGroup label="Editing" w={202} inset={10}>
            <Stack>
                <LabelButton h={23} gap={3}><IconSlot><SigmaIcon /></IconSlot>AutoSum&nbsp;&nbsp; <Chevron /></LabelButton>
                <LabelButton h={23} gap={3}><IconSlot><FillIcon /></IconSlot>Fill <Chevron /></LabelButton>
                <LabelButton h={23} gap={3}><IconSlot><EraserIcon /></IconSlot>Clear <Chevron /></LabelButton>
            </Stack>
            <Stack left={4}>
                <Row>
                    <Tall w={45} icon={<SortIcon />} first="Sort &amp;" second="Filter" />
                    <Tall w={45} icon={<FindIcon />} first="Find &amp;" second="Select" />
                </Row>
            </Stack>
        </RibbonGroup>

        <RibbonGroup label="Analysis" w={63} inset={0}>
            <Tall w={62} icon={<BoltIcon />} first="Analyze" second="Data" />
        </RibbonGroup>
    </Ribbon>;

const Formula = () =>
    <FormulaBar>
        <BarBox w={103}>
            <NameInput aria-label="Name box" defaultValue="S1" />
            <BarButton w={20} aria-label="Names">
                <Icon w={7} h={4} tone="none"><path fill="#666" d="M0 0h7L3.5 4z" /></Icon>
            </BarButton>
        </BarBox>
        <Grip>
            <Icon w={2} h={12} tone="#a0a0a0" strokeWidth="2" strokeDasharray="2 3"><path d="M1 0v12" /></Icon>
        </Grip>
        <BarBox w={110}>
            <BarButton w={36} aria-label="Cancel">
                <Icon w={12} h={12} tone="#b5b5b5" strokeWidth="1.5"><path d="M1 1l10 10M11 1 1 11" /></Icon>
            </BarButton>
            <BarButton w={36} aria-label="Enter">
                <Icon w={14} h={12} tone="#b5b5b5" strokeWidth="1.8"><path d="M1 6l4 4 8-9" /></Icon>
            </BarButton>
            <BarButton w={36} aria-label="Insert function">
                <Glyph $italic size={16}>fx</Glyph>
            </BarButton>
        </BarBox>
        <FormulaInput aria-label="Formula" defaultValue="Lead Score" />
    </FormulaBar>;

const Cells = () =>
    <Sheet>
        <Veil />
        <Grid>
            <colgroup>
                <col width={26} />
                {columns.map(([name, w]) => <col key={name} width={w ?? undefined} />)}
            </colgroup>
            <thead>
                <tr>
                    <Corner>
                        <Icon w={24} h={18} tone="none"><path fill="#b4b4b4" d="M22 4v12H10z" /></Icon>
                    </Corner>
                    {columns.map(([name]) =>
                        <ColumnHead key={name} scope="col" $active={name === "S"}>
                            {name === "AG" ? "" : name}
                        </ColumnHead>
                    )}
                </tr>
            </thead>
            <tbody>
                <tr>
                    <RowHead scope="row">1</RowHead>
                    {columns.map(([name]) => <Cell key={name}>{titles[name]}</Cell>)}
                </tr>
                {rows.map((row, i) =>
                    <tr key={`row-${i}`}>
                        <RowHead scope="row">{i + 2}</RowHead>
                        {columns.map(([name], c) =>
                            <Cell
                                key={name}
                                $side={sideOf(row, name)}
                                $picked={name === "S"}
                                $veiled={name === "T"}
                                $spill={spills(row, name, columns[c + 1]?.[0])}
                            >
                                {row[name]}
                            </Cell>
                        )}
                    </tr>
                )}
            </tbody>
        </Grid>
        <Highlight />
    </Sheet>;

const App = () =>
    <Page>
        <GlobalStyle />
        <Window>
            <Title />
            <Tabs />
            <Tools />
            <Formula />
            <Cells />
        </Window>
    </Page>;

export default App;
